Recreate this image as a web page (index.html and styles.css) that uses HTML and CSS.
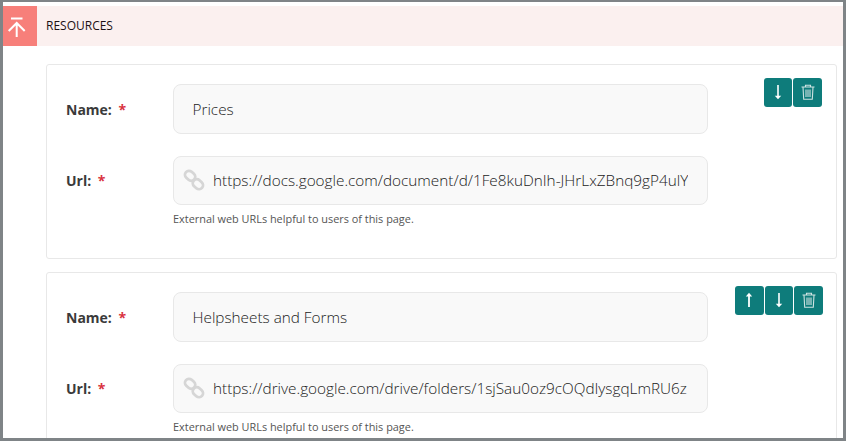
FILE: index.html
```html
<!DOCTYPE html>
<html lang="en">
<head>
<meta charset="utf-8">
<title>Resources</title>
<link rel="stylesheet" href="styles.css">
</head>
<body>
<svg class="defs" width="0" height="0" aria-hidden="true">
  <defs>
    <symbol id="link" viewBox="0 0 22 22">
      <g fill="none" stroke="#d6d6d6" stroke-width="2.800">
        <rect x="1.600" y="2.800" width="11" height="8" rx="4" transform="rotate(42 7.100 6.800)"/>
        <rect x="9.400" y="11.200" width="11" height="8" rx="4" transform="rotate(42 14.900 15.200)"/>
      </g>
    </symbol>
    <symbol id="up" viewBox="0 0 28 28">
      <path d="M14 21V8" stroke="#fff" stroke-width="1.800"/>
      <path d="M10.800 10.600h6.400L14 6.800z" fill="#fff"/>
    </symbol>
    <symbol id="down" viewBox="0 0 28 28">
      <path d="M14 7v13" stroke="#fff" stroke-width="1.600"/>
      <path d="M10.800 17.800h6.400L14 21.200z" fill="#fff"/>
    </symbol>
    <symbol id="trash" viewBox="0 0 28 28">
      <g fill="none" stroke="#cfe3e2" stroke-width="1.100">
        <path d="M7.500 9h13M11.500 9V7.200h5V9M9 9l.7 12.200h8.600L19 9"/>
        <path d="M12 11.500v7.500M14 11.500v7.500M16 11.500v7.500"/>
      </g>
    </symbol>
  </defs>
</svg>
<div class="frame">
  <header class="section-head">
    <span class="collapse">
      <svg width="34" height="40" viewBox="0 0 34 40"><path d="M8 12.500h11.500M13.700 31V17.500M5.700 25l8-8 8 8" fill="none" stroke="#fff" stroke-width="2"/></svg>
    </span>
    <span class="section-title">RESOURCES</span>
  </header>

  <section class="card card-first">
    <div class="actions">
      <button class="btn" type="button"><svg class="ico"><use href="#down"/></svg></button>
      <button class="btn" type="button"><svg class="ico"><use href="#trash"/></svg></button>
    </div>
    <div class="row row-name">
      <label class="label">Name: <span class="req">*</span></label>
      <div class="input"><span class="value">Prices</span></div>
    </div>
    <div class="row row-url">
      <label class="label">Url: <span class="req">*</span></label>
      <div class="field">
        <div class="input has-icon"><svg class="link"><use href="#link"/></svg><span class="value">https://docs.google.com/document/d/1Fe8kuDnIh-JHrLxZBnq9gP4ulYhT</span></div>
        <p class="help">External web URLs helpful to users of this page.</p>
      </div>
    </div>
  </section>

  <section class="card">
    <div class="actions actions-wide">
      <button class="btn" type="button"><svg class="ico"><use href="#up"/></svg></button>
      <button class="btn" type="button"><svg class="ico"><use href="#down"/></svg></button>
      <button class="btn" type="button"><svg class="ico"><use href="#trash"/></svg></button>
    </div>
    <div class="row row-name">
      <label class="label">Name: <span class="req">*</span></label>
      <div class="input"><span class="value">Helpsheets and Forms</span></div>
    </div>
    <div class="row row-url">
      <label class="label">Url: <span class="req">*</span></label>
      <div class="field">
        <div class="input has-icon"><svg class="link"><use href="#link"/></svg><span class="value">https://drive.google.com/drive/folders/1sjSau0oz9cOQdIysgqLmRU6z</span></div>
        <p class="help">External web URLs helpful to users of this page.</p>
      </div>
    </div>
  </section>
</div>
</body>
</html>
```
FILE: styles.css
```css
* { box-sizing: border-box; }
html, body { margin: 0; height: 100%; }
body { font-family: "Open Sans", sans-serif; background: #fff; overflow: hidden; }
.defs { position: absolute; }
.frame {
  width: 846px;
  height: 441px;
  border: solid #7f8487;
  border-width: 2px 3px 3px 3px;
  overflow: hidden;
  background: #fff;
  padding-top: 4px;
}
.section-head {
  display: flex;
  align-items: center;
  height: 40px;
  background: #fbf0ef;
}
.collapse {
  width: 34px;
  height: 40px;
  background: #f77f7a;
  display: block;
}
.collapse svg { display: block; }
.section-title {
  margin: 0 0 1px 9px;
  font-size: 12px;
  color: #1d1014;
}
.card {
  position: relative;
  margin: 0 6px 13px 43px;
  height: 195px;
  border: 1px solid #e8e8e8;
  border-radius: 3px;
  padding: 19px 0 0 19px;
}
.card-first { margin-top: 18px; }
.actions {
  position: absolute;
  top: 13px;
  right: 14px;
  display: flex;
  gap: 1px;
}
.actions-wide { right: 13px; }
.btn {
  width: 28.700px;
  height: 28.500px;
  padding: 0;
  border: 0;
  border-radius: 3px;
  background: #0e7c7b;
  display: block;
}
.ico { width: 28px; height: 28px; display: block; margin: 0 auto; }
.row { display: flex; }
.row-name { align-items: center; margin-bottom: 22px; }
.row-name .label { padding-top: 1px; }
.row-name .input { padding-top: 1px; }
.label {
  width: 107px;
  flex: none;
  font-size: 14px;
  font-weight: 700;
  color: #3a3a3a;
}
.req { color: #d9323f; margin-left: 3px; }
.row-url .label { padding-top: 15px; }
.field { width: 535px; }
.input {
  width: 535px;
  height: 49.500px;
  display: flex;
  align-items: center;
  border: 1px solid #e8e8e8;
  border-radius: 8px;
  background: #f9f9f9;
  padding: 0 19px 0 18.500px;
  font-size: 15.300px;
  font-weight: 300;
  color: #222;
  overflow: hidden;
  white-space: nowrap;
}
.has-icon { padding: 0 19px 0 9px; }
.link { width: 22px; height: 22px; flex: none; margin-right: 8px; }
.value { overflow: hidden; }
.help {
  margin: 7px 0 0;
  font-size: 10.900px;
  line-height: 14px;
  color: #555;
}
```
